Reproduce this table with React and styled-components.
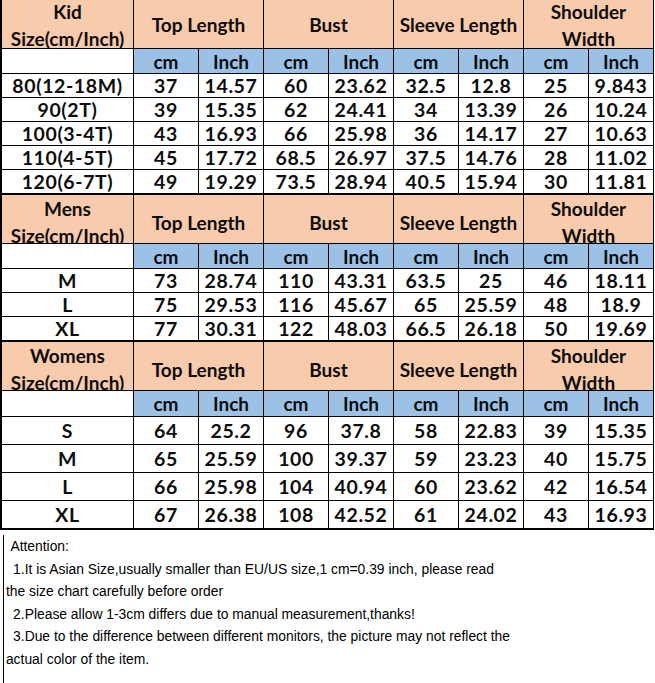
import React from 'react'
import styled, { createGlobalStyle } from 'styled-components'

const GlobalStyle = createGlobalStyle`
  html, body {
    margin: 0;
    padding: 0;
    background: #fff;
    overflow: hidden;
  }
`;

const COLUMNS = ['Top Length', 'Bust', 'Sleeve Length', 'Shoulder\nWidth'];

const SECTIONS = [
  {
    title: 'Kid',
    shift: 1,
    unitHeight: 24,
    rowHeight: 23,
    rows: [
      ['80(12-18M)', '37', '14.57', '60', '23.62', '32.5', '12.8', '25', '9.843'],
      ['90(2T)', '39', '15.35', '62', '24.41', '34', '13.39', '26', '10.24'],
      ['100(3-4T)', '43', '16.93', '66', '25.98', '36', '14.17', '27', '10.63'],
      ['110(4-5T)', '45', '17.72', '68.5', '26.97', '37.5', '14.76', '28', '11.02'],
      ['120(6-7T)', '49', '19.29', '73.5', '28.94', '40.5', '15.94', '30', '11.81'],
    ],
  },
  {
    title: 'Mens',
    shift: 6,
    unitHeight: 24,
    rowHeight: 23,
    rows: [
      ['M', '73', '28.74', '110', '43.31', '63.5', '25', '46', '18.11'],
      ['L', '75', '29.53', '116', '45.67', '65', '25.59', '48', '18.9'],
      ['XL', '77', '30.31', '122', '48.03', '66.5', '26.18', '50', '19.69'],
    ],
  },
  {
    title: 'Womens',
    shift: 6,
    unitHeight: 25,
    rowHeight: 27,
    rows: [
      ['S', '64', '25.2', '96', '37.8', '58', '22.83', '39', '15.35'],
      ['M', '65', '25.59', '100', '39.37', '59', '23.23', '40', '15.75'],
      ['L', '66', '25.98', '104', '40.94', '60', '23.62', '42', '16.54'],
      ['XL', '67', '26.38', '108', '42.52', '61', '24.02', '43', '16.93'],
    ],
  },
];

const NOTES = [
  { text: 'Attention:', indent: 6 },
  { text: '1.It is Asian Size,usually smaller than EU/US size,1 cm=0.39 inch, please read', indent: 9 },
  { text: 'the size chart carefully before order', indent: 1 },
  { text: '2.Please allow 1-3cm differs due to manual measurement,thanks!', indent: 9 },
  { text: '3.Due to the difference between different monitors, the picture may not reflect the', indent: 9 },
  { text: 'actual color of the item.', indent: 1 },
];

export default function App() {
  return (
    <Page>
      <GlobalStyle />
      <Table>
        {SECTIONS.map((section, i) => (
          <Section
            key={section.title}
            $first={i === 0}
            $last={i === SECTIONS.length - 1}
            $unit={section.unitHeight}
            $row={section.rowHeight}
            $count={section.rows.length}
          >
            <HeadCell $shift={section.shift}>
              {section.title}
              <br />
              Size(cm/Inch)
            </HeadCell>
            {COLUMNS.map((col) => (
              <HeadCell key={col} $shift={section.shift} $span={2}>
                {col.split('\n').map((part, k) => (
                  <React.Fragment key={k}>
                    {k > 0 && <br />}
                    {part}
                  </React.Fragment>
                ))}
              </HeadCell>
            ))}
            <Cell />
            {COLUMNS.map((col) => (
              <React.Fragment key={col}>
                <UnitCell>cm</UnitCell>
                <UnitCell>Inch</UnitCell>
              </React.Fragment>
            ))}
            {section.rows.map((row) =>
              row.map((value, j) => <Cell key={row[0] + j} $data>{value}</Cell>)
            )}
          </Section>
        ))}
      </Table>
      <Notes>
        {NOTES.map((note) => (
          <NoteLine key={note.text} $indent={note.indent}>
            {note.text}
          </NoteLine>
        ))}
      </Notes>
    </Page>
  );
}

const Page = styled.div`
  width: 655px;
  height: 683px;
  overflow: hidden;
  background: #fff;
`;

const Table = styled.div`
  display: flex;
  flex-direction: column;
  width: 654px;
  font-family: 'Lato', 'Liberation Sans', sans-serif;
  font-weight: 700;
  font-size: 19px;
  color: #0d0d0d;
`;

const Section = styled.div`
  display: grid;
  grid-template-columns: 131px repeat(8, 64px);
  grid-template-rows: 48px ${(p) => p.$unit}px repeat(${(p) => p.$count}, ${(p) => p.$row}px);
  gap: 1px;
  background: #000;
  border-left: 2px solid #000;
  border-right: 1px solid #000;
  border-top: ${(p) => (p.$first ? '0' : '2px solid #000')};
  border-bottom: ${(p) => (p.$last ? '2px solid #000' : '0')};
`;

const Cell = styled.div`
  display: flex;
  align-items: center;
  justify-content: center;
  background: #fff;
  line-height: 1;
  white-space: nowrap;
  font-size: ${(p) => (p.$data ? '19.5px' : '19px')};
  letter-spacing: ${(p) => (p.$data ? '0.6px' : '0')};
`;

const UnitCell = styled(Cell)`
  background: #9bc2e6;
`;

const HeadCell = styled.div`
  grid-column: span ${(p) => p.$span || 1};
  display: flex;
  align-items: center;
  justify-content: center;
  box-sizing: border-box;
  padding-top: ${(p) => p.$shift}px;
  background: #f8cbad;
  text-align: center;
  line-height: 27px;
  white-space: nowrap;
  overflow: hidden;
`;

const Notes = styled.div`
  margin: 5px 0 0 3px;
  padding-left: 1px;
  border-left: 1px solid #000;
  height: 150px;
  font-family: 'Liberation Sans', Arial, sans-serif;
  font-size: 15.4px;
  line-height: 22.6px;
  color: #000;
`;

const NoteLine = styled.div`
  white-space: nowrap;
  padding-left: ${(p) => p.$indent}px;
  transform: scaleX(0.9);
  transform-origin: left center;
`;
